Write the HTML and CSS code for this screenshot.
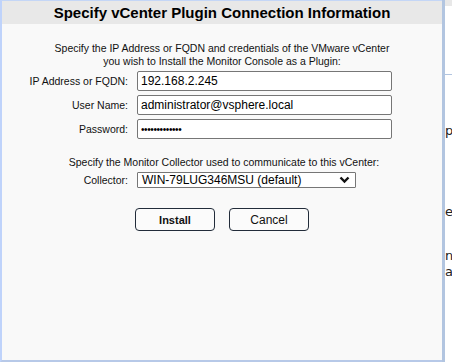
FILE: index.html
```html
<!DOCTYPE html>
<html>
<head>
<meta charset="utf-8">
<link rel="stylesheet" href="styles.css">
</head>
<body>
<div class="page">
  <div class="dialog">
    <div class="title">Specify vCenter Plugin Connection Information</div>
    <div class="content">
      <p class="intro">Specify the IP Address or FQDN and credentials of the VMware vCenter<br>you wish to Install the Monitor Console as a Plugin:</p>
      <div class="form">
        <div class="row"><label class="lbl">IP Address or FQDN:</label><input class="field" type="text" value="192.168.2.245"></div>
        <div class="row"><label class="lbl">User Name:</label><input class="field" type="text" value="administrator@vsphere.local"></div>
        <div class="row"><label class="lbl">Password:</label><input class="field pw" type="password" value="abcdefghijklm"></div>
      </div>
      <p class="intro2">Specify the Monitor Collector used to communicate to this vCenter:</p>
      <div class="row"><label class="lbl">Collector:</label>
        <div class="select"><span>WIN-79LUG346MSU (default)</span>
          <svg class="chev" width="11" height="8" viewBox="0 0 11 8"><path d="M1.5 1.5 L5.5 5.5 L9.5 1.5" fill="none" stroke="#111" stroke-width="2.4"/></svg>
        </div>
      </div>
      <div class="buttons">
        <button class="btn bold">Install</button>
        <button class="btn">Cancel</button>
      </div>
    </div>
  </div>
  <div class="strip"></div>
  <div class="behind">
    <div class="behind-top"></div>
    <div class="behind-line"></div>
    <div class="frag f1">p</div>
    <div class="frag f2">e</div>
    <div class="frag f3">ni</div>
    <div class="frag f4">a</div>
  </div>
</div>
</body>
</html>
```
FILE: styles.css
```css
html, body { margin: 0; padding: 0; }
body { background: #fff; font-family: "Liberation Sans", Arial, sans-serif; color: #000; overflow: hidden; }
.page { display: flex; width: 452px; height: 362px; }
.dialog {
  width: 440px; height: 359px;
  border-left: 2px solid #bfd3fb;
  border-top: 1px solid #c4d6f6;
  border-bottom: 2px solid #b7c9e8;
  background: #f9f9f9;
  display: flex; flex-direction: column;
}
.title {
  height: 23px; background: #e8e8e8;
  font-weight: bold; font-size: 15px;
  text-align: center; line-height: 24px;
}
.content { display: flex; flex-direction: column; }
.intro { margin: 18px 0 0; font-size: 10.5px; line-height: 13px; text-align: center; color: #111; }
.intro2 { margin: 17px 0 0; font-size: 10.5px; line-height: 13px; text-align: center; color: #111; padding-left: 4px; }
.form { display: flex; flex-direction: column; gap: 4px; margin-top: 3px; }
.row { display: flex; align-items: center; gap: 9px; }
.lbl { width: 126px; text-align: right; font-size: 10.5px; color: #111; }
.field {
  box-sizing: border-box; width: 255px; height: 20px; margin: 0;
  border: 1px solid #767676; border-radius: 2px; background: #fff;
  font-family: "Liberation Sans", Arial, sans-serif; font-size: 12px; padding: 0 3px; color: #000;
}
.field.pw { font-size: 10px; letter-spacing: -0.4px; }
.content > .row { margin-top: 3px; }
.select {
  box-sizing: border-box; width: 219px; height: 16px;
  border: 1px solid #767676; border-radius: 1px; background: #fff;
  font-size: 12px; display: flex; align-items: center; justify-content: space-between; padding: 0 5px 0 4px;
}
.chev { display: block; }
.buttons { display: flex; gap: 14px; margin-top: 20px; padding-left: 133px; }
.btn {
  box-sizing: border-box; width: 80px; height: 23px; margin: 0;
  border: 1px solid #222c3a; border-radius: 4px; background: #fbfbfb;
  font-family: "Liberation Sans", Arial, sans-serif; font-size: 12px; color: #111; padding: 0;
}
.btn.bold { font-weight: bold; font-size: 11px; }
.strip { width: 3px; height: 362px; background: #b2c5e0; }
.behind { width: 7px; height: 362px; position: relative; overflow: hidden; background: #fff; }
.behind-top { height: 6px; background: #e8e8e8; }
.behind-line { position: absolute; left: 0; top: 74px; width: 7px; height: 1px; background: #b2c5e0; }
.frag { position: absolute; left: 0; font-family: "DejaVu Sans", sans-serif; font-size: 13px; color: #222; line-height: 15px; }
.f1 { top: 123px; }
.f2 { top: 204px; }
.f3 { top: 248px; }
.f4 { top: 264px; }
```
